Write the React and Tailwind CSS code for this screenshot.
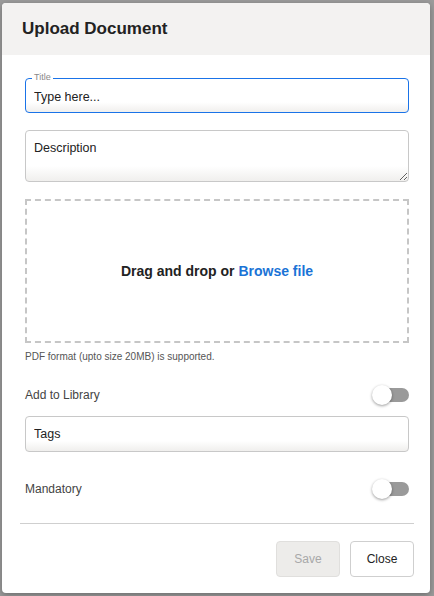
import React, { useState } from 'react';

function Toggle({ on, onChange }) {
    return (
        <button type="button" onClick={() => onChange(!on)} className="relative w-[37px] h-[22px] flex items-center">
            <span className={`absolute left-[4px] right-0 h-[14px] rounded-full ${on ? 'bg-[#90b8ef]' : 'bg-[#9a9a9a]'}`}></span>
            <span className={`absolute top-[1px] w-[20px] h-[20px] rounded-full bg-white shadow-[0_1px_3px_rgba(0,0,0,0.4)] ${on ? 'left-[17px]' : 'left-0'}`}></span>
        </button>
    );
}

export default function App() {
    const [title, setTitle] = useState('');
    const [desc, setDesc] = useState('');
    const [tags, setTags] = useState('');
    const [library, setLibrary] = useState(false);
    const [mandatory, setMandatory] = useState(false);

    const field = "w-full rounded-[4px] border bg-gradient-to-b from-white from-70% to-[#f0efed] px-[8px] text-[12.5px] text-[#222] outline-none placeholder:text-[#222]";

    return (<div className="min-h-[596px] bg-[#9b9b9b] p-[2px] pt-[3px] font-['Liberation_Sans',Arial,sans-serif]">
        <div className="w-[428px] h-[590px] bg-white rounded-[4px] overflow-hidden flex flex-col shadow-[0_2px_6px_rgba(0,0,0,0.3)]">
            <div className="h-[52px] bg-[#f3f2f1] flex items-center px-[20px] shrink-0">
                <h1 className="text-[17px] font-bold text-[#222]">Upload Document</h1>
            </div>

            <div className="pl-[23px] pr-[21px] pt-[23px] flex flex-col">
                <div className="relative">
                    <span className="absolute left-[7px] top-[-6px] bg-white px-[2px] text-[9px] leading-[10px] text-[#888]">Title</span>
                    <input value={title} onChange={e => setTitle(e.target.value)} placeholder="Type here..." className={`${field} h-[35px] border-[#1a73e8] pt-[3px]`} />
                </div>

                <textarea value={desc} onChange={e => setDesc(e.target.value)} placeholder="Description" className={`${field} border-[#c8c8c8] mt-[17px] h-[52px] pt-[8px] resize-y block`} />

                <div className="mt-[17px] h-[144px] border-2 border-dashed border-[#c6c6c6] flex items-center justify-center">
                    <p className="text-[14px] font-bold text-[#222]">Drag and drop or <span className="text-[#1a73d6] cursor-pointer">Browse file</span></p>
                </div>
                <p className="mt-[6px] text-[10px] text-[#555]">PDF format (upto size 20MB) is supported.</p>

                <div className="mt-[20px] flex items-center justify-between h-[22px]">
                    <span className="text-[12px] text-[#444]">Add to Library</span>
                    <Toggle on={library} onChange={setLibrary} />
                </div>

                <input value={tags} onChange={e => setTags(e.target.value)} placeholder="Tags" className={`${field} border-[#c8c8c8] mt-[10px] h-[36px]`} />

                <div className="mt-[26px] flex items-center justify-between h-[22px]">
                    <span className="text-[12px] text-[#444]">Mandatory</span>
                    <Toggle on={mandatory} onChange={setMandatory} />
                </div>
            </div>

            <div className="ml-[18px] mr-[16px] mt-[23px] border-t border-[#cfcfcf]"></div>

            <div className="pr-[16px] pt-[17px] flex justify-end gap-[10px]">
                <button disabled className="w-[64px] h-[36px] rounded-[4px] bg-[#edecea] border border-[#e0dfdd] text-[12px] text-[#a8a8a8]">Save</button>
                <button className="w-[64px] h-[36px] rounded-[4px] bg-white border border-[#cfcfcf] text-[12px] text-[#222]">Close</button>
            </div>
        </div>
    </div>);
}
